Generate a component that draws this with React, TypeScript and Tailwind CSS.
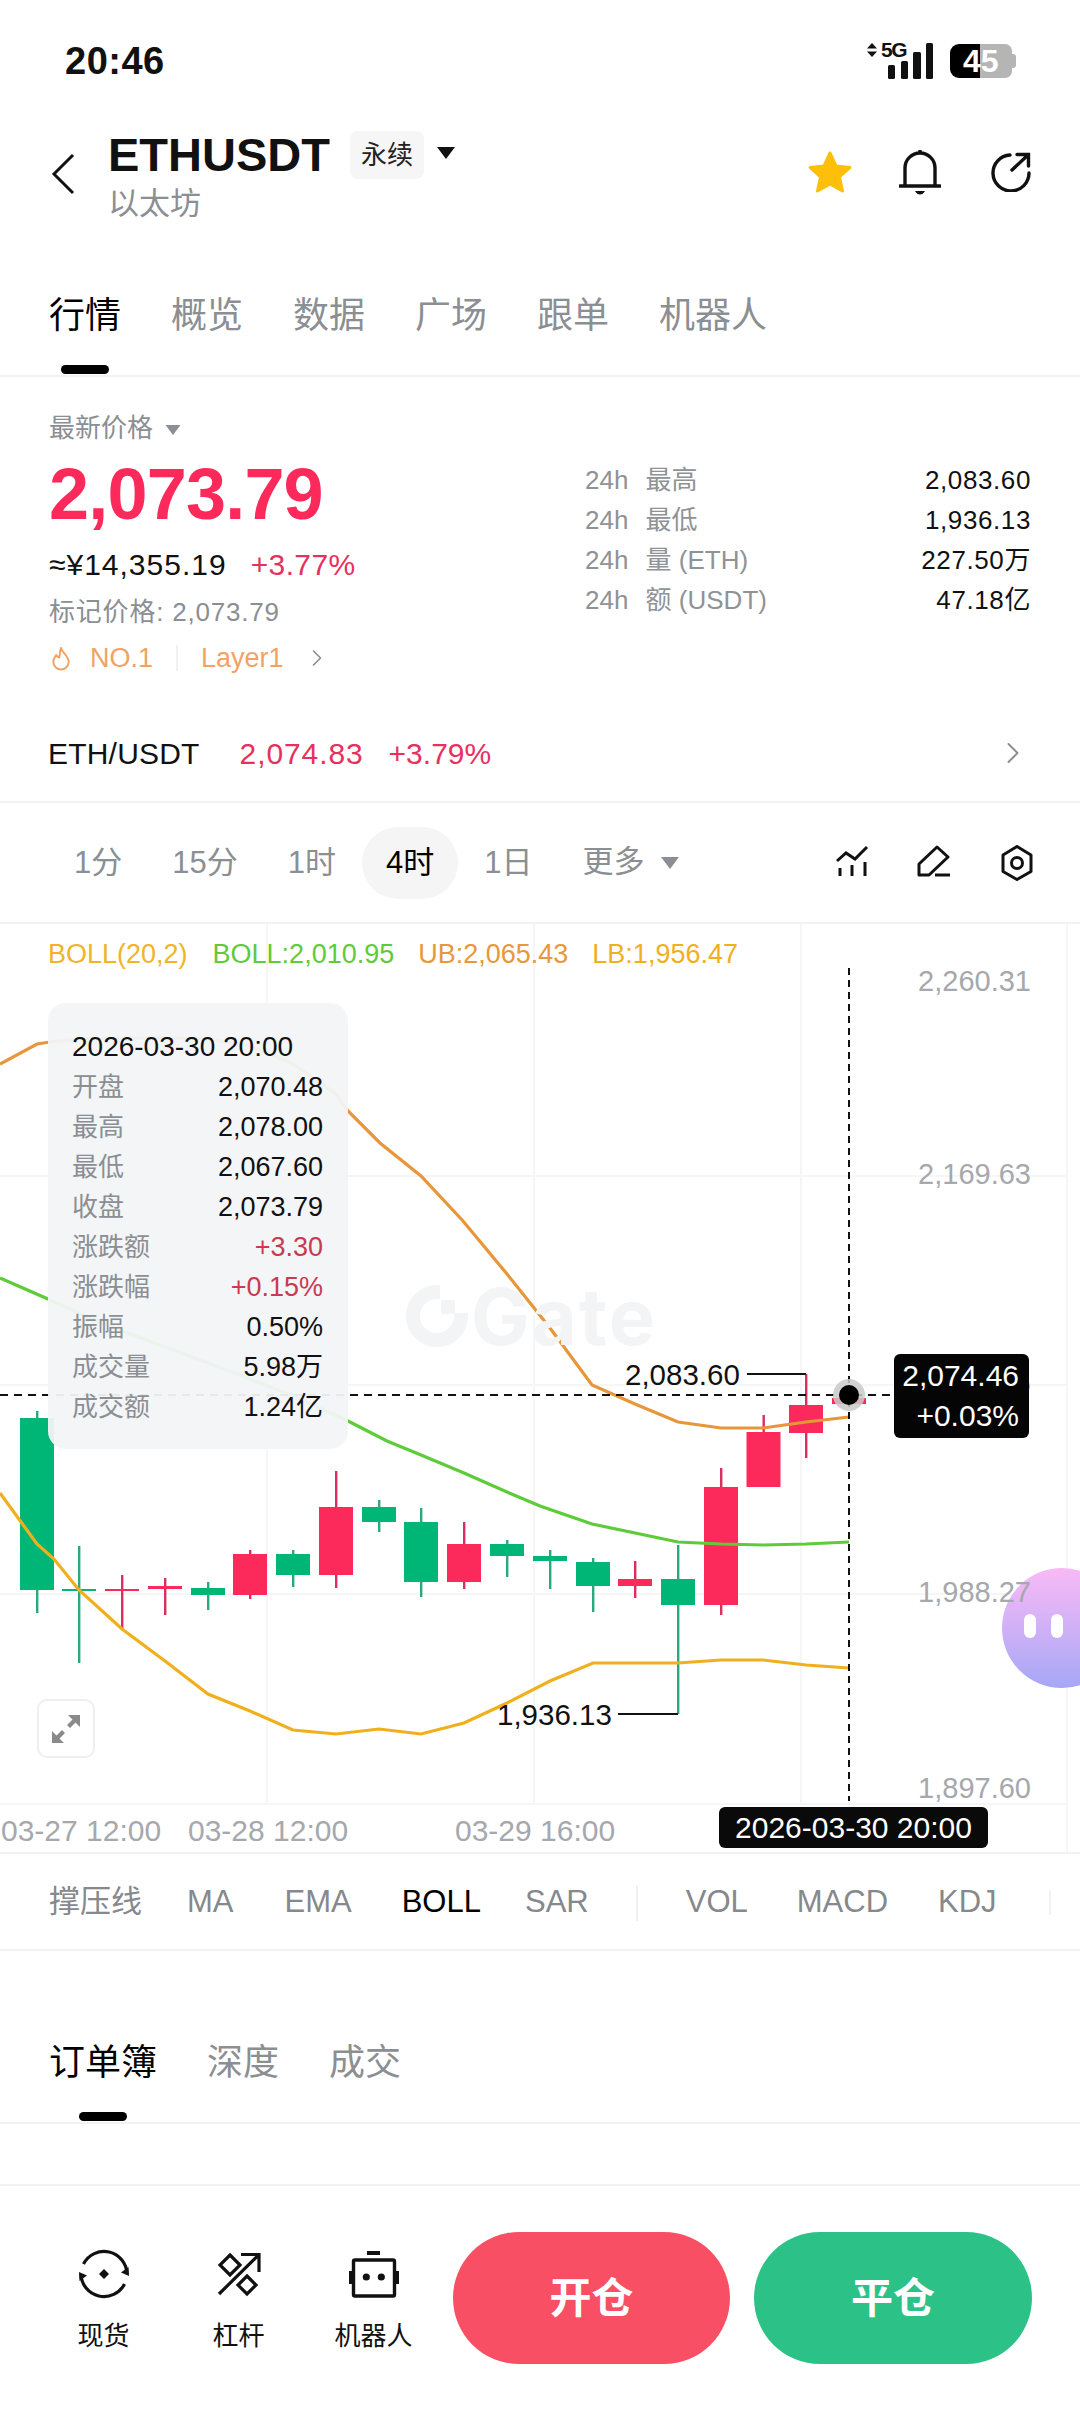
import { ChevronRight } from "lucide-react";

type Candle = { x: number; open: number; close: number; high: number; low: number; up: boolean };

const candles: Candle[] = [
  { x: 37, open: 1417, close: 1589, high: 1410, low: 1612, up: false },
  { x: 79, open: 1588, close: 1590, high: 1545, low: 1662, up: false },
  { x: 122, open: 1588, close: 1590, high: 1574, low: 1629, up: true },
  { x: 165, open: 1585, close: 1588, high: 1577, low: 1614, up: true },
  { x: 208, open: 1587, close: 1594, high: 1581, low: 1609, up: false },
  { x: 250, open: 1553, close: 1594, high: 1549, low: 1598, up: true },
  { x: 293, open: 1553, close: 1574, high: 1549, low: 1586, up: false },
  { x: 336, open: 1506, close: 1574, high: 1470, low: 1587, up: true },
  { x: 379, open: 1506, close: 1521, high: 1499, low: 1531, up: false },
  { x: 421, open: 1521, close: 1581, high: 1507, low: 1596, up: false },
  { x: 464, open: 1543, close: 1581, high: 1521, low: 1588, up: true },
  { x: 507, open: 1543, close: 1555, high: 1539, low: 1576, up: false },
  { x: 550, open: 1555, close: 1560, high: 1549, low: 1588, up: false },
  { x: 593, open: 1561, close: 1585, high: 1557, low: 1611, up: false },
  { x: 635, open: 1578, close: 1585, high: 1560, low: 1597, up: true },
  { x: 678, open: 1578, close: 1604, high: 1544, low: 1713, up: false },
  { x: 721, open: 1486, close: 1604, high: 1467, low: 1614, up: true },
  { x: 763.5, open: 1431, close: 1486, high: 1414, low: 1486, up: true },
  { x: 806, open: 1404, close: 1432, high: 1373, low: 1457, up: true },
  { x: 849, open: 1397, close: 1403, high: 1397, low: 1403, up: true },
];

const ubLine =
  "0,1063 37,1043 50,1041 79,1038 122,1037 165,1037 208,1038 250,1045 293,1063 336,1093 348,1110 380,1142 421,1175 463,1220 507,1273 550,1327 592,1384 635,1403 678,1421 721,1427 763,1427 806,1421 849,1416";
const bollLine =
  "0,1277 48,1298 79,1312 122,1330 165,1346 208,1362 250,1378 293,1395 348,1420 387,1440 421,1454 464,1472 507,1491 540,1505 592,1523 678,1541 721,1543 763,1544 806,1543 849,1541";
const lbLine =
  "0,1492 37,1543 54,1558 79,1589 122,1628 165,1660 208,1693 250,1710 293,1729 336,1733 379,1728 421,1733 464,1722 507,1702 550,1680 593,1662 635,1662 678,1662 721,1659 763,1659 806,1664 849,1667";

const tooltipRows = [
  { label: "开盘", value: "2,070.48" },
  { label: "最高", value: "2,078.00" },
  { label: "最低", value: "2,067.60" },
  { label: "收盘", value: "2,073.79" },
  { label: "涨跌额", value: "+3.30", red: true },
  { label: "涨跌幅", value: "+0.15%", red: true },
  { label: "振幅", value: "0.50%" },
  { label: "成交量", value: "5.98万" },
  { label: "成交额", value: "1.24亿" },
];

const stats = [
  { label: "最高", value: "2,083.60" },
  { label: "最低", value: "1,936.13" },
  { label: "量 (ETH)", value: "227.50万" },
  { label: "额 (USDT)", value: "47.18亿" },
];

const priceLabels = [
  { text: "2,260.31", y: 981 },
  { text: "2,169.63", y: 1174 },
  { text: "2,078.95", y: 1383 },
  { text: "1,988.27", y: 1592 },
  { text: "1,897.60", y: 1788 },
];

const timeLabels = [
  { text: "03-27 12:00", x: 1 },
  { text: "03-28 12:00", x: 188 },
  { text: "03-29 16:00", x: 455 },
];

function Tabs({ items }: { items: string[] }) {
  return (
    <div className="flex gap-[50px] pl-[49px] pt-[68px] h-[149px] border-b-2 border-[#f2f2f3]">
      {items.map((t, i) => (
        <div key={t} className="flex flex-col items-center">
          <span className={`h-[40px] leading-[40px] text-[36px] ${i === 0 ? "text-black" : "text-[#8b8e93]"}`}>{t}</span>
          {i === 0 && <span className="mt-[29px] h-[9px] w-[48px] rounded-full bg-black" />}
        </div>
      ))}
    </div>
  );
}

function Triangle({ className }: { className: string }) {
  return (
    <svg viewBox="0 0 18 12" className={className} fill="currentColor">
      <path d="M0 0H18L9 12Z" />
    </svg>
  );
}

function StatusBar() {
  return (
    <div className="flex items-center justify-between h-[122px] pl-[65px] pr-[64px]">
      <span className="text-[38px] font-bold text-[#111] tracking-[0.5px]">20:46</span>
      <div className="flex items-center gap-[17px]">
        <div className="relative w-[66px] h-[36px]">
          <svg viewBox="0 0 66 36" className="absolute inset-0 w-[66px] h-[36px]" fill="#111">
            <path d="M0 5.5L5 0L10 5.5ZM0 8.5H10L5 14Z" />
            <rect x="21" y="22" width="7" height="14" rx="1.5" />
            <rect x="34" y="18" width="7" height="18" rx="1.5" />
            <rect x="46" y="9" width="8" height="27" rx="1.5" />
            <rect x="59" y="0" width="7" height="36" rx="1.5" />
          </svg>
          <span className="absolute left-[14px] top-[-3px] text-[21px] leading-[20px] font-bold text-[#111] tracking-[-1.5px]">5G</span>
        </div>
        <div className="relative flex items-center h-[34px]">
          <div className="w-[30px] h-[34px] bg-black rounded-l-[9px]" />
          <div className="w-[32px] h-[34px] bg-[#b5b5b5] rounded-r-[7px]" />
          <div className="w-[4px] h-[14px] bg-[#b5b5b5] rounded-r-[3px]" />
          <span className="absolute left-[13px] top-0 h-[34px] leading-[34px] text-[32px] font-bold text-white">45</span>
        </div>
      </div>
    </div>
  );
}

function Header() {
  return (
    <div className="flex items-start h-[106px] pt-[9px] pr-[49px]">
      <svg viewBox="0 0 24 42" className="w-[24px] h-[42px] mt-[22px] ml-[51px] mr-[33px]" fill="none" stroke="#111" strokeWidth="3">
        <path d="M22 2L3 21L22 40" />
      </svg>
      <div className="flex flex-col">
        <div className="flex items-center h-[48px]">
          <span className="text-[47px] font-bold text-[#111] leading-[48px]">ETHUSDT</span>
          <span className="ml-[20px] w-[74px] h-[48px] rounded-[8px] bg-[#f6f6f6] flex items-center justify-center text-[26px] text-[#222]">永续</span>
          <Triangle className="ml-[13px] w-[18px] h-[12px] mb-[4px] text-[#111]" />
        </div>
        <span className="mt-[5px] h-[40px] leading-[40px] text-[31px] text-[#8b8e93]">以太坊</span>
      </div>
      <div className="ml-auto flex items-center mt-[18px]">
        <svg viewBox="0 0 46 44" className="w-[46px] h-[44px] mr-[46px]" fill="#fdbf08" stroke="#fdbf08" strokeWidth="3" strokeLinejoin="round">
          <path d="M23 3L29 16L43 17.5L32.5 27L35.5 41L23 34L10.5 41L13.5 27L3 17.5L17 16Z" />
        </svg>
        <svg viewBox="0 0 42 46" className="w-[42px] h-[46px] mr-[50px]" fill="none" stroke="#111" strokeWidth="3.4">
          <path d="M6 36V19a15 15 0 0 1 30 0V36" />
          <path d="M1 37H41" strokeLinecap="round" />
          <path d="M21 1V4" />
          <path d="M16 42H26Q24 45.5 21 45.5Q18 45.5 16 42Z" fill="#111" stroke="none" />
        </svg>
        <svg viewBox="0 0 40 40" className="w-[40px] h-[40px]" fill="none" stroke="#111" strokeWidth="3.4" strokeLinecap="round">
          <path d="M19 3A18 18 0 1 0 38 21" />
          <path d="M21 18L37 3M26 2.5H37.5V14" />
        </svg>
      </div>
    </div>
  );
}

function PriceSection() {
  return (
    <div className="flex justify-between h-[322px] pl-[49px] pr-[49px]">
      <div className="flex flex-col pt-[33px]">
        <div className="flex items-center h-[36px] text-[26px] text-[#8b8e93]">
          最新价格
          <Triangle className="ml-[12px] mt-[4px] w-[16px] h-[10px] text-[#8b8e93]" />
        </div>
        <div className="mt-[13px] h-[70px] leading-[70px] text-[72px] font-bold text-[#fb2a5b] tracking-[-0.8px]">2,073.79</div>
        <div className="mt-[17px] flex items-center h-[36px] text-[30px]">
          <span className="text-[#111] tracking-[1px]">≈¥14,355.19</span>
          <span className="ml-[24px] text-[#e8305f] tracking-[0.4px]">+3.77%</span>
        </div>
        <div className="mt-[12px] h-[36px] leading-[36px] text-[26px] text-[#8b8e93] tracking-[0.8px]">标记价格: 2,073.79</div>
        <div className="mt-[10px] flex items-center h-[36px] text-[26px] text-[#f0a364]">
          <svg viewBox="0 0 20 26" className="ml-[2px] w-[20px] h-[25px]" fill="none" stroke="#f0a364" strokeWidth="2">
            <path d="M10 2C11 7 18 10 18 16.5A8 8 0 0 1 2 16.5C2 13 4 11 5 9.5C6 11 7 12 8 12C9 9 9 5 10 2Z" strokeLinejoin="round" />
          </svg>
          <span className="ml-[19px] text-[27px]">NO.1</span>
          <span className="mx-[23px] w-[2px] h-[26px] bg-[#f1f1f1]" />
          <span className="text-[27px]">Layer1</span>
          <ChevronRight className="ml-[19px] w-[28px] h-[28px] text-[#8b8e93]" strokeWidth={1.4} />
        </div>
      </div>
      <div className="w-[446px] flex flex-col pt-[83px]">
        {stats.map((s) => (
          <div key={s.label} className="flex justify-between items-center h-[40px] text-[26px]">
            <span className="text-[#8f9296]">24h <span className="ml-[10px]">{s.label}</span></span>
            <span className="text-[#111] tracking-[0.6px]">{s.value}</span>
          </div>
        ))}
      </div>
    </div>
  );
}

function SpotRow() {
  return (
    <div className="flex items-center h-[104px] pt-[6px] pl-[48px] pr-[49px] border-b-2 border-[#f2f2f3] text-[30px]">
      <span className="text-[#111] tracking-[0.2px]">ETH/USDT</span>
      <span className="ml-[40px] text-[#e8305f] tracking-[0.9px]">2,074.83</span>
      <span className="ml-[25px] text-[#e8305f]">+3.79%</span>
      <ChevronRight className="ml-auto w-[36px] h-[36px] text-[#8b8e93]" strokeWidth={1.3} />
    </div>
  );
}

function Timeframes() {
  const items = ["1分", "15分", "1时", "4时", "1日"];
  return (
    <div className="flex items-center h-[121px] pl-[50px] pr-[45px] border-b-2 border-[#f2f2f3] text-[31px] text-[#8b8e93]">
      <div className="flex items-center gap-[2px]">
        {items.map((t) => (
          <span
            key={t}
            className={`h-[72px] leading-[72px] px-[24px] rounded-full ${t === "4时" ? "bg-[#f5f5f5] text-black" : ""}`}
          >
            {t}
          </span>
        ))}
        <span className="flex items-center ml-[24px]">
          更多
          <Triangle className="ml-[17px] w-[18px] h-[12px] text-[#8b8e93]" />
        </span>
      </div>
      <div className="ml-auto flex items-center gap-[46px]">
        <svg viewBox="0 0 36 36" className="w-[36px] h-[36px]" fill="none" stroke="#111" strokeWidth="3">
          <path d="M2 16L11 8L20 14L32 2" />
          <path d="M5 23V31M17 20V31M30 17V31" />
        </svg>
        <svg viewBox="0 0 36 36" className="w-[36px] h-[36px]" fill="none" stroke="#111" strokeWidth="3">
          <path d="M20 2L31 12L12 30H2V19Z" strokeLinejoin="round" />
          <path d="M18 30H33" />
        </svg>
        <svg viewBox="0 0 36 36" className="w-[36px] h-[36px]" fill="none" stroke="#111" strokeWidth="3">
          <path d="M18 1.5L32 10V26.5L18 34.5L4 26.5V10Z" strokeLinejoin="round" />
          <circle cx="18" cy="18" r="5.5" />
        </svg>
      </div>
    </div>
  );
}

function Chart() {
  return (
    <div className="relative h-[930px] border-b-2 border-[#f2f2f3] overflow-hidden">
      {/* page coordinates in the viewBox, chart starts at y=923 */}
      <svg viewBox="0 923 1080 930" className="absolute left-0 top-0 w-[1080px] h-[930px]" fill="none">
        <path d="M0 1175H1067M0 1384H1067M0 1593H1067M0 1803H1067M267 923V1803M534 923V1803M801 923V1803M1067 923V1853" stroke="#f6f6f7" strokeWidth="2" />
        <g fill="#f3f4f5" stroke="none">
          <path d="M437 1295A20 20 0 1 0 457 1315H465A28 28 0 1 1 437 1287Z" stroke="#f3f4f5" strokeWidth="6" />
          <rect x="441" y="1299" width="14" height="14" rx="2" />
        </g>
        {candles.map((c) => (
          <g key={c.x}>
            <rect x={c.x - 1} y={c.high} width="2.4" height={c.low - c.high} fill={c.up ? "#dc2d5e" : "#2aa87e"} />
            <rect x={c.x - 17} y={c.open} width="34" height={c.close - c.open} fill={c.up ? "#fb2a5b" : "#00b676"} />
          </g>
        ))}
        <polyline points={ubLine} stroke="#e8963a" strokeWidth="3.2" />
        <polyline points={bollLine} stroke="#5ecb3a" strokeWidth="3.2" />
        <polyline points={lbLine} stroke="#f0b01e" strokeWidth="3.2" />
        <path d="M0 1394H894" stroke="#111" strokeWidth="2" strokeDasharray="8 6" />
        <path d="M849 967V1800" stroke="#111" strokeWidth="2" strokeDasharray="7 5" />
        <path d="M747 1373H806" stroke="#111" strokeWidth="2" />
        <path d="M618 1713H678" stroke="#111" strokeWidth="2" />
        <circle cx="849" cy="1394" r="16" fill="#c9c9c9" fillOpacity="0.85" />
        <circle cx="849" cy="1394" r="10" fill="#000" />
      </svg>

      <span className="absolute left-[471px] top-[358px] font-['Inter',sans-serif] text-[78px] leading-[70px] font-bold text-[#f3f4f5] tracking-[2px]">Gate</span>

      <div className="absolute left-[48px] top-[14px] flex text-[27px] leading-[32px] whitespace-nowrap">
        <span className="text-[#f0b429]">BOLL(20,2)</span>
        <span className="ml-[25px] text-[#5ecb3a]">BOLL:2,010.95</span>
        <span className="ml-[24px] text-[#e8983a]">UB:2,065.43</span>
        <span className="ml-[24px] text-[#f0b01e]">LB:1,956.47</span>
      </div>

      <div className="absolute left-[1002px] top-[644px] w-[120px] h-[120px] rounded-full bg-linear-to-b from-[#f9b9f6] to-[#a5a7f6]">
        <span className="absolute left-[22px] top-[46px] w-[12px] h-[24px] rounded-full bg-white" />
        <span className="absolute left-[49px] top-[46px] w-[12px] h-[24px] rounded-full bg-white" />
      </div>

      {priceLabels.map((p) => (
        <span
          key={p.text}
          className="absolute right-[49px] text-[29px] leading-[36px] text-[#a5a8ad]"
          style={{ top: p.y - 923 - 19 }}
        >
          {p.text}
        </span>
      ))}

      {timeLabels.map((t) => (
        <span key={t.text} className="absolute top-[889px] text-[30px] leading-[36px] text-[#a5a8ad] whitespace-nowrap" style={{ left: t.x }}>
          {t.text}
        </span>
      ))}

      <span className="absolute left-[625px] top-[433px] text-[29.5px] leading-[36px] text-[#111]">2,083.60</span>
      <span className="absolute left-[497px] top-[773px] text-[29.5px] leading-[36px] text-[#111]">1,936.13</span>

      <div className="absolute left-[48px] top-[79px] w-[300px] h-[446px] rounded-[18px] bg-[#f2f4f6]/95 pt-[24px] pl-[24px] pr-[25px]">
        <div className="h-[40px] leading-[40px] text-[28px] text-[#111] whitespace-nowrap">2026-03-30 20:00</div>
        {tooltipRows.map((r) => (
          <div key={r.label} className="flex justify-between items-center h-[40px] text-[26px]">
            <span className="text-[#8b8e93]">{r.label}</span>
            <span className={`text-[27px] ${r.red ? "text-[#c93a50]" : "text-[#111]"}`}>{r.value}</span>
          </div>
        ))}
      </div>

      <div className="absolute left-[37px] top-[775px] w-[58px] h-[59px] rounded-[10px] border-2 border-[#efefef] bg-white flex items-center justify-center">
        <svg viewBox="0 0 28 28" className="w-[28px] h-[28px]" fill="#8a8a8a">
          <path d="M28 0V12L23.5 7.5L18 13L15 10L20.5 4.5L16 0Z" />
          <path d="M0 28V16L4.5 20.5L10 15L13 18L7.5 23.5L12 28Z" />
        </svg>
      </div>

      <div className="absolute left-[894px] top-[430px] w-[135px] h-[84px] rounded-[6px] bg-[#050505] flex flex-col items-end justify-center pr-[10px] text-[30px] leading-[40px] text-white">
        <span>2,074.46</span>
        <span>+0.03%</span>
      </div>

      <div className="absolute left-[719px] top-[883px] w-[269px] h-[41px] rounded-[6px] bg-[#0a0a0a] flex items-center justify-center text-[30px] text-white whitespace-nowrap">
        2026-03-30 20:00
      </div>
    </div>
  );
}

function IndicatorRow() {
  return (
    <div className="flex items-center h-[97px] pt-[2px] pl-[49px] border-b-2 border-[#f2f2f3] text-[31px] text-[#85888c] whitespace-nowrap">
      <span>撑压线</span>
      <span className="ml-[45px]">MA</span>
      <span className="ml-[51px]">EMA</span>
      <span className="ml-[50px] text-black">BOLL</span>
      <span className="ml-[44px]">SAR</span>
      <span className="ml-[47px] w-[2px] h-[36px] bg-[#f1f1f1]" />
      <span className="ml-[48px]">VOL</span>
      <span className="ml-[49px]">MACD</span>
      <span className="ml-[50px]">KDJ</span>
      <span className="ml-[52px] w-[2px] h-[24px] bg-[#f1f1f1]" />
    </div>
  );
}

function BottomItem({ label, icon }: { label: string; icon: React.ReactNode }) {
  return (
    <div className="flex flex-col items-center w-[135px]">
      <div className="h-[52px] flex items-center justify-center">{icon}</div>
      <span className="mt-[18px] h-[36px] leading-[36px] text-[26px] text-[#111]">{label}</span>
    </div>
  );
}

function BottomBar() {
  return (
    <div className="flex items-start border-t-2 border-[#f2f2f3] pt-[46px] pl-[36px]">
      <div className="flex mt-[16px]">
        <BottomItem
          label="现货"
          icon={
            <svg viewBox="0 0 52 52" className="w-[52px] h-[52px]" fill="none" stroke="#111" strokeWidth="3.2">
              <path d="M5.5 16A23 23 0 0 1 49 26" />
              <path d="M46.5 36A23 23 0 0 1 3 26" />
              <path d="M50.5 19L51 28L43 24.5Z" fill="#111" stroke="none" />
              <path d="M1.5 33L1 24L9 27.5Z" fill="#111" stroke="none" />
              <path d="M26 21L31 26L26 31L21 26Z" fill="#111" stroke="none" />
            </svg>
          }
        />
        <BottomItem
          label="杠杆"
          icon={
            <svg viewBox="0 0 46 46" className="w-[46px] h-[46px]" fill="none" stroke="#111" strokeWidth="3.2">
              <path d="M3 43L43 3.5M25 3.5H43V21" />
              <path d="M14 4L24 14L14 24L4 14Z" />
              <path d="M31 25L40 34L31 43L22 34Z" />
            </svg>
          }
        />
        <BottomItem
          label="机器人"
          icon={
            <svg viewBox="0 0 50 47" className="w-[50px] h-[47px]" fill="none">
              <rect x="18" y="0" width="13" height="4" fill="#111" />
              <rect x="4.5" y="9" width="41" height="36" rx="1.5" stroke="#111" strokeWidth="3.4" />
              <rect x="0" y="20" width="3.5" height="13" fill="#111" />
              <rect x="46.5" y="20" width="3.5" height="13" fill="#111" />
              <circle cx="17.3" cy="26" r="3.6" fill="#111" />
              <circle cx="32.3" cy="26" r="3.6" fill="#111" />
            </svg>
          }
        />
      </div>
      <div className="ml-[12px] w-[277px] h-[132px] rounded-full bg-[#f94f64] flex items-center justify-center text-[42px] font-bold text-white">开仓</div>
      <div className="ml-[24px] w-[278px] h-[132px] rounded-full bg-[#2cc287] flex items-center justify-center text-[42px] font-bold text-white">平仓</div>
    </div>
  );
}

export default function App() {
  return (
    <div className="w-[1080px] h-[2412px] bg-white overflow-hidden flex flex-col font-['Liberation_Sans','Noto_Sans_CJK_SC',sans-serif]">
      <StatusBar />
      <Header />
      <Tabs items={["行情", "概览", "数据", "广场", "跟单", "机器人"]} />
      <PriceSection />
      <SpotRow />
      <Timeframes />
      <Chart />
      <IndicatorRow />
      <div className="mt-[24px]">
        <Tabs items={["订单簿", "深度", "成交"]} />
      </div>
      <div className="h-[60px]" />
      <BottomBar />
    </div>
  );
}
